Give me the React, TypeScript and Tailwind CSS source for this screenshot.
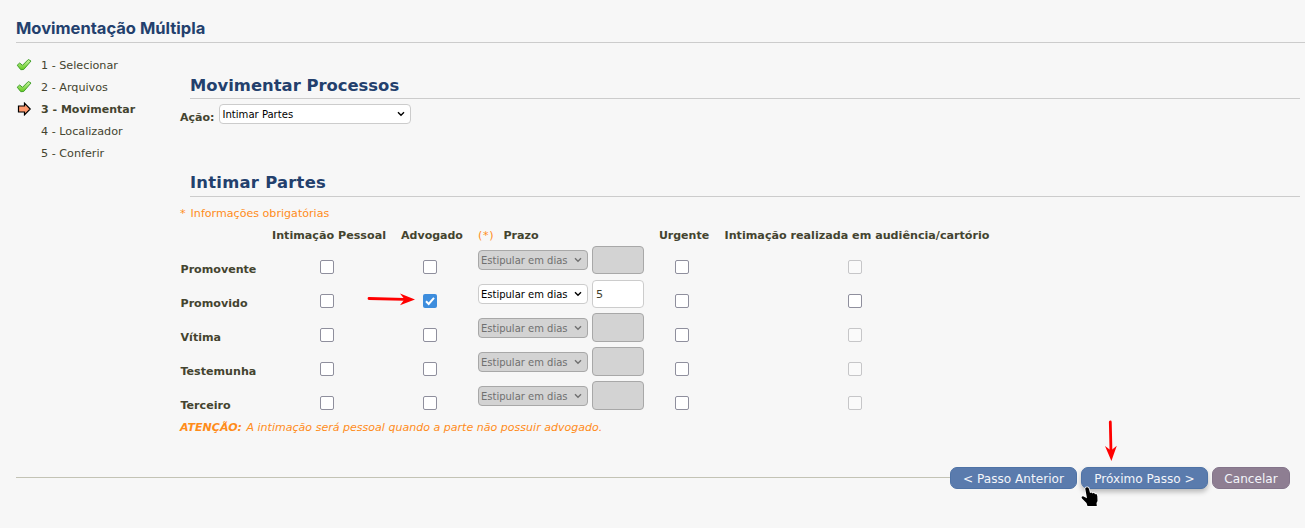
import React from 'react';

const Check = () => (
  <svg width="16" height="14" viewBox="0 0 16 14">
    <defs>
      <linearGradient id="leaf" x1="0" y1="0" x2="0" y2="1">
        <stop offset="0" stopColor="#c9f5a4" />
        <stop offset="1" stopColor="#62c91d" />
      </linearGradient>
    </defs>
    <path d="M1.2 7.2 3.7 5 6.5 7.3 12.3 1.5 15 3 7.7 11.5 4.8 11.7Z" fill="url(#leaf)" stroke="#43a02b" strokeWidth="1" strokeLinejoin="round" />
  </svg>
);

const Arrow = () => (
  <svg width="16" height="14" viewBox="0 0 16 14">
    <path d="M2.5 4H8.5V1.2L14.2 7 8.5 12.8V10H2.5Z" fill="#ff9a6e" stroke="#000" strokeWidth="1.2" />
  </svg>
);

const Chevron = () => (
  <svg width="8" height="6" viewBox="0 0 8 6" className="shrink-0">
    <path d="M1 1.2 4 4.2 7 1.2" fill="none" stroke="currentColor" strokeWidth="1.4" />
  </svg>
);

const steps = ['1 - Selecionar', '2 - Arquivos', '3 - Movimentar', '4 - Localizador', '5 - Conferir'];

const rows = [
  { name: 'Promovente', active: false, short: true },
  { name: 'Promovido', active: true, short: true },
  { name: 'Vítima', active: false, short: false },
  { name: 'Testemunha', active: false, short: false },
  { name: 'Terceiro', active: false, short: false },
];

function Box({ checked = false, disabled = false }: { checked?: boolean; disabled?: boolean }) {
  if (checked) {
    return (
      <span role="checkbox" aria-checked="true" className="mt-[17px] mr-1 h-3.5 w-3.5 justify-self-center rounded-[2px] bg-[#3d8ddd]">
        <svg width="14" height="14" viewBox="0 0 14 14">
          <path d="M3 7.3 5.7 10 11 3.8" fill="none" stroke="#fff" strokeWidth="2" />
        </svg>
      </span>
    );
  }
  return (
    <span
      role="checkbox"
      aria-checked="false"
      className={`mt-[17px] mr-1 h-3.5 w-3.5 justify-self-center rounded-[2px] border ${
        disabled ? 'border-[#c6c6c8] bg-[#fafafa]' : 'border-[#8f8f9d] bg-white'
      }`}
    />
  );
}

const columns = 'grid grid-cols-[90px_118px_88px_178px_60px_286px]';

export default function App() {
  return (
    <div className="relative flex h-[528px] w-[1305px] flex-col overflow-hidden bg-[#f7f7f7] pl-4 font-['DejaVu_Sans',sans-serif] text-[11.2px] leading-[14px] text-[#44442f]">
      <h1 className="h-[43px] shrink-0 border-b border-[#cccccc] pt-[18px] font-['Inter',sans-serif] text-[16.5px] leading-5 font-bold text-[#23406d]">
        Movimentação Múltipla
      </h1>
      <div className="flex h-[434px] shrink-0">
        <ul className="w-[164px] shrink-0 pt-[11px]">
          {steps.map((s, i) => (
            <li key={s} className={`flex h-[22px] items-center ${i === 2 ? 'font-bold' : ''}`}>
              <span className="w-[25px]">{i < 2 ? <Check /> : i === 2 ? <Arrow /> : null}</span>
              <span className={i === 2 ? 'pt-px text-[11px]' : 'pt-px'}>{s}</span>
            </li>
          ))}
        </ul>
        <main className="flex-1">
          <h2 className="mr-[5px] ml-2.5 h-14 border-b border-[#cccccc] pt-[33px] text-[16.4px] leading-5 font-bold text-[#23406d]">
            Movimentar Processos
          </h2>
          <div className="flex h-[66px] pt-[5px]">
            <b className="w-[39px] pt-[7px] text-[11px]">Ação:</b>
            <div className="flex h-5 w-48 items-center justify-between rounded-[4px] border border-[#cccccc] bg-white pr-[5px] pl-[2.5px] font-['DejaVu_Sans_Condensed','DejaVu_Sans',sans-serif] text-black">
              <span className="pt-px">Intimar Partes</span>
              <Chevron />
            </div>
          </div>
          <h2 className="mr-[5px] ml-2.5 h-8 border-b border-[#cccccc] pt-2 text-[16.4px] leading-5 font-bold tracking-[0.25px] text-[#23406d]">
            Intimar Partes
          </h2>
          <p className="mt-[10px] flex gap-[5px] text-[#ff8c1a]">
            <span>*</span>
            <span className="text-[11.1px]">Informações obrigatórias</span>
          </p>
          <div className={`${columns} mt-2 h-[14px] text-center text-[11.15px] font-bold whitespace-nowrap`}>
            <span />
            <span>Intimação Pessoal</span>
            <span className="text-[11px]">Advogado</span>
            <span className="flex gap-[9px] pl-[2px]">
              <span className="font-normal tracking-[0.7px] text-[#ff8c1a]">(*)</span>Prazo
            </span>
            <span className="text-[11px]">Urgente</span>
            <span>Intimação realizada em audiência/cartório</span>
          </div>
          {rows.map((r) => (
            <div key={r.name} className={`${columns} h-[34px]`}>
              <b className="pt-5 pl-[0.5px] text-[11.1px]">{r.name}</b>
              <Box />
              <Box checked={r.active} />
              <div className="flex items-start gap-1 pl-[2px]">
                <div
                  className={`mt-[7px] flex h-5 w-[110px] items-center justify-between rounded-[4px] border pr-[5px] pl-[2px] font-['DejaVu_Sans_Condensed','DejaVu_Sans',sans-serif] text-[11.1px] whitespace-nowrap ${
                    r.active ? 'border-[#cccccc] bg-white text-black' : 'border-[#a8a8a8] bg-[#d3d3d3] text-[#707070]'
                  }`}
                >
                  <span className="pt-px">Estipular em dias</span>
                  <Chevron />
                </div>
                <div
                  className={`flex w-[52px] items-center rounded-[4px] border pt-px pl-[3px] ${r.short ? 'mt-[3px] h-7' : 'mt-[2px] h-[29px]'} ${
                    r.active ? 'border-[#cccccc] bg-white' : 'border-[#a8a8a8] bg-[#d3d3d3]'
                  }`}
                >
                  {r.active ? '5' : ''}
                </div>
              </div>
              <Box />
              <Box disabled={!r.active} />
            </div>
          ))}
          <p className="mt-2 flex gap-[4.5px] text-[11.06px] text-[#ff8c1a] italic">
            <b>ATENÇÃO:</b>
            <span>A intimação será pessoal quando a parte não possuir advogado.</span>
          </p>
        </main>
      </div>
      <footer className="-mt-[10px] flex h-[22px] shrink-0 items-center pr-[15px] text-[12.1px] text-[#f3f5fa]">
        <div className="mb-px h-px flex-1 bg-[#c3c3b5]" />
        <button className="h-[22px] w-[127px] rounded-[7px] border border-[#4f73a6] bg-[#5a7bad] pt-px">&lt; Passo Anterior</button>
        <button className="ml-1 h-[22px] w-[127px] rounded-[7px] border border-[#4f73a6] bg-[#5a7bad] pt-px shadow-[0_3px_5px_rgba(0,0,0,0.25)]">
          Próximo Passo &gt;
        </button>
        <button className="ml-1 h-[22px] w-[78px] rounded-[7px] border border-[#84758b] bg-[#8e7e92] pt-px">Cancelar</button>
      </footer>
      <svg className="absolute top-[292px] left-[366px]" width="50" height="15" viewBox="0 0 50 15">
        <path d="M3 6.5 38 7.3" stroke="#f00" strokeWidth="2.8" strokeLinecap="round" />
        <path d="M49 7.5 34 1.5 38.5 7.3 34 13.2Z" fill="#f00" />
      </svg>
      <svg className="absolute top-[418px] left-[1103px]" width="16" height="44" viewBox="0 0 16 44">
        <path d="M7.3 4 8 34" stroke="#f00" strokeWidth="2.8" strokeLinecap="round" />
        <path d="M8.4 43 2 28 8 32.5 13.8 27.8Z" fill="#f00" />
      </svg>
      <svg className="absolute top-[486px] left-[1080px]" width="20" height="22" viewBox="0 0 20 22">
        <path
          d="M6 1.5Q8.5 .5 9 3L10 7 11.5 6.5 12.5 7.5 14 6.8 15 8.2 16.5 8 17.3 10 17.5 15 16.5 17 16.8 20H7.5L6.5 17 2 12.5Q.8 10.5 3 10.3L7 12.2 5.3 3Q5.1 2 6 1.5Z"
          fill="#000"
          stroke="#fff"
          strokeWidth="1.6"
          strokeLinejoin="round"
          paintOrder="stroke"
        />
      </svg>
    </div>
  );
}
